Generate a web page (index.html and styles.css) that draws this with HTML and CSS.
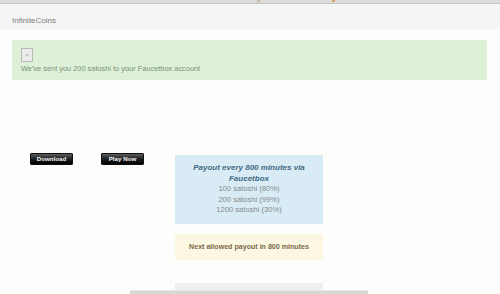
FILE: index.html
```html
<!DOCTYPE html>
<html lang="en">
<head>
  <meta charset="UTF-8">
  <meta name="viewport" content="width=device-width, initial-scale=1.0">
  <title>InfiniteCoins</title>
  <link rel="stylesheet" href="styles.css">
</head>
<body>
  <div class="topbar">
    <span class="dot dot-one"></span>
    <span class="dot dot-two"></span>
  </div>
  <div class="navbar">
    <span class="brand">InfiniteCoins</span>
  </div>

  <div class="alert-success">
    <span class="broken-img">&times;</span>
    <p>We've sent you 200 satoshi to your Faucetbox account</p>
  </div>

  <div class="main">
    <div class="left-col">
      <button class="btn-black">Download</button>
      <button class="btn-black">Play Now</button>
    </div>
    <div class="center-col">
      <div class="info-box">
        <p class="info-title">Payout every 800 minutes via Faucetbox</p>
        <p>100 satoshi (80%)</p>
        <p>200 satoshi (99%)</p>
        <p>1200 satoshi (30%)</p>
      </div>
      <div class="warning-box">Next allowed payout in 800 minutes</div>
      <div class="claim-box"></div>
    </div>
    <div class="right-col"></div>
  </div>

  <div class="bottom-bar"></div>
</body>
</html>
```

FILE: styles.css
```css
body{
  margin: 0;
  font-family: "Liberation Sans", Arial, sans-serif;
  background: #fdfdfb;
  color: #555;
  overflow: hidden;
}
p{
  margin: 0;
}
.topbar{
  height: 3px;
  background: #dcdcdc;
  border-bottom: 1px solid #c4c4c4;
  display: flex;
}
.dot{
  width: 3px;
  height: 2px;
  background: #d9a56a;
}
.dot-one{
  margin-left: 257px;
  background: #c8b8a0;
}
.dot-two{
  margin-left: 72px;
}
.navbar{
  height: 26px;
  background: #f5f5f5;
  padding-left: 12px;
  line-height: 27px;
}
.brand{
  font-size: 8px;
  color: #7d7d7d;
}
.alert-success{
  margin: 10px 13px 0 12px;
  height: 40px;
  box-sizing: border-box;
  background: #dff0d8;
  padding: 8px 9px 0;
  font-size: 7.4px;
  color: #76907a;
}
.broken-img{
  display: block;
  width: 10px;
  height: 12px;
  border: 1px solid #b9b9b9;
  background: #ececec;
  color: #999;
  font-size: 6px;
  line-height: 12px;
  text-align: center;
  margin-bottom: 2px;
}
.main{
  display: grid;
  grid-template-columns: 145px 148px 1fr;
  padding-left: 30px;
  margin-top: 73px;
}
.left-col{
  display: flex;
  gap: 28px;
  align-items: flex-start;
}
.btn-black{
  height: 12px;
  width: 43px;
  padding: 0;
  border: 1px solid #111;
  border-radius: 1px;
  background: linear-gradient(#5a5a5a, #1b1b1b 55%, #000);
  color: #f4f4f4;
  font-family: "Liberation Sans", Arial, sans-serif;
  font-weight: bold;
  font-size: 6.2px;
  line-height: 10px;
}
.center-col{
  padding-top: 2px;
}
.info-box{
  background: #d9ebf5;
  padding: 8px 8px 8px;
  text-align: center;
  font-size: 7.6px;
  line-height: 10.6px;
  color: #858a8e;
}
.info-title{
  font-weight: bold;
  font-style: italic;
  font-size: 8px;
  color: #416a84;
}
.warning-box{
  margin-top: 10px;
  height: 26px;
  line-height: 27px;
  background: #fcf7e2;
  text-align: center;
  font-weight: bold;
  font-size: 7.1px;
  color: #7b6a4b;
}
.claim-box{
  margin-top: 23px;
  height: 40px;
  background: #efefef;
}
.bottom-bar{
  position: fixed;
  left: 130px;
  bottom: 0;
  width: 238px;
  height: 3px;
  background: #d8d8d8;
  border-top: 1px solid #e6e6e6;
}
```
